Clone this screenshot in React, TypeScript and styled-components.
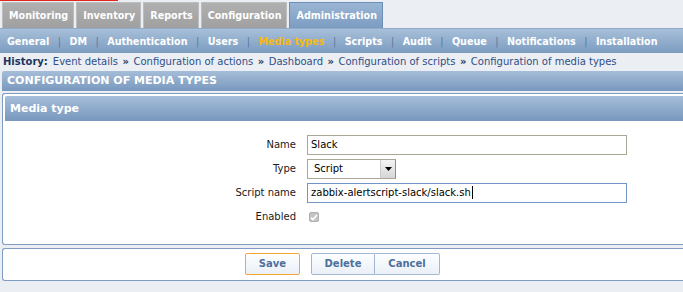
import React from "react";
import styled, { createGlobalStyle } from "styled-components";

const GlobalStyle = createGlobalStyle`
  html, body {
    margin: 0;
    padding: 0;
    background: #ebeef2;
    overflow: hidden;
  }
  body {
    font-family: "DejaVu Sans", Verdana, sans-serif;
    font-size: 10px;
    color: #1a1a1a;
  }
`;

const Page = styled.div`
  width: 686px;
`;

const RedLine = styled.div`
  width: 118px;
  height: 1px;
  background: #e0261f;
`;

const MainTabs = styled.div`
  display: flex;
  gap: 2px;
  padding: 1px 0 0 2px;
  height: 27px;
  box-sizing: border-box;
`;

const Tab = styled.div<{ $active?: boolean }>`
  box-sizing: border-box;
  height: 26px;
  line-height: 25px;
  padding: 0 5px 0 6px;
  font-weight: bold;
  font-size: 9.6px;
  color: #ffffff;
  white-space: nowrap;
  border: 1px solid ${(p) => (p.$active ? "#6c8fb8" : "#bdbdbd")};
  border-bottom: none;
  background: ${(p) =>
    p.$active
      ? "linear-gradient(#9bb6d4, #7b9cc1)"
      : "linear-gradient(#b0b0b0, #a0a0a0)"};
`;

const SubNav = styled.div`
  display: flex;
  align-items: center;
  height: 24px;
  padding-left: 7px;
  border-top: 1px solid #8eabcc;
  background: linear-gradient(#a7bfd9, #7c9cc0);
  font-weight: bold;
  font-size: 9.6px;
  white-space: nowrap;
`;

const SubItem = styled.span<{ $current?: boolean }>`
  color: ${(p) => (p.$current ? "#f7b90f" : "#ffffff")};
`;

const Sep = styled.span`
  color: #5777a0;
  font-weight: normal;
  margin: 0 8.5px;
`;

const History = styled.div`
  height: 18px;
  line-height: 18px;
  padding-left: 3px;
  font-size: 10px;
  white-space: nowrap;
`;

const HistoryLabel = styled.span`
  font-weight: bold;
  color: #1d3560;
  margin-right: 5px;
`;

const HistoryLink = styled.span`
  color: #2f4f88;
`;

const Arrow = styled.span`
  font-weight: bold;
  color: #1d3560;
  margin: 0 4.5px;
`;

const HeaderBar = styled.div<{ $tall?: boolean }>`
  height: ${(p) => (p.$tall ? "25px" : "20px")};
  line-height: ${(p) => (p.$tall ? "25px" : "20px")};
  padding-left: 5px;
  background: linear-gradient(#a5bdd8, #7898be);
  border-radius: 2px 0 0 0;
  color: #ffffff;
  font-weight: bold;
  font-size: 11px;
  white-space: nowrap;
`;

const Section = styled.div`
  margin-left: 2px;
`;

const Box = styled.div`
  margin-top: 2px;
  border: 1px solid #7f9dc2;
  border-right: none;
  border-radius: 3px 0 0 3px;
  background: #ffffff;
  padding: 2px 0 0 2px;
`;

const FormGrid = styled.div`
  display: grid;
  grid-template-columns: 291px 320px;
  grid-auto-rows: 20px;
  column-gap: 11px;
  row-gap: 4px;
  padding: 14px 0 17px 0;
`;

const Label = styled.div`
  text-align: right;
  line-height: 20px;
  color: #1a1a1a;
`;

const Field = styled.div<{ $focused?: boolean }>`
  box-sizing: border-box;
  height: 20px;
  line-height: 18px;
  padding: 0 3px;
  border: 1px solid ${(p) => (p.$focused ? "#7496c6" : "#aba796")};
  background: #ffffff;
  color: #000000;
  font-size: 10px;
  white-space: nowrap;
`;

const Caret = styled.span`
  display: inline-block;
  width: 1px;
  height: 13px;
  background: #000000;
  vertical-align: -3px;
  margin-left: 1px;
`;

const Select = styled.div`
  box-sizing: border-box;
  width: 89px;
  height: 20px;
  display: flex;
  border: 1px solid #aba796;
  border-right-color: #8d8d8d;
  background: #ffffff;
`;

const SelectValue = styled.div`
  flex: 1;
  line-height: 18px;
  padding-left: 6px;
  font-size: 10px;
  color: #000000;
`;

const SelectButton = styled.div`
  width: 14px;
  display: flex;
  align-items: center;
  justify-content: center;
  background: linear-gradient(#f4f4f4, #d6d6d6);
  border-left: 1px solid #c9c9c9;
`;

const CheckCell = styled.div`
  display: flex;
  align-items: center;
  padding-left: 2px;
`;

const Check = styled.span`
  box-sizing: border-box;
  width: 10px;
  height: 10px;
  display: flex;
  align-items: center;
  justify-content: center;
  border: 1px solid #b0b0b0;
  border-radius: 2px;
  background: #c4c4c4;
`;

const Footer = styled.div`
  margin-top: 3px;
  border: 1px solid #7f9dc2;
  border-right: none;
  border-radius: 3px 0 0 3px;
  background: #ffffff;
  display: flex;
  justify-content: center;
  padding: 4px 4px 5px 0;
`;

const Button = styled.div<{ $primary?: boolean; $joined?: "left" | "right" }>`
  box-sizing: border-box;
  height: 22px;
  line-height: 20px;
  padding: 0 10px;
  min-width: ${(p) => (p.$primary ? "55px" : "64px")};
  text-align: center;
  font-weight: bold;
  font-size: 10px;
  color: #4d6f9c;
  background: linear-gradient(#fdfeff, #eaf0f7);
  border: 1px solid ${(p) => (p.$primary ? "#f5a634" : "#a2b7d3")};
  border-radius: ${(p) =>
    p.$joined === "left" ? "2px 0 0 2px" : p.$joined === "right" ? "0 2px 2px 0" : "2px"};
  margin-right: ${(p) => (p.$primary ? "11px" : "0")};
  ${(p) => (p.$joined === "right" ? "border-left: none; min-width: 65px;" : "")}
`;

const mainTabs = ["Monitoring", "Inventory", "Reports", "Configuration", "Administration"];
const subItems = [
  "General",
  "DM",
  "Authentication",
  "Users",
  "Media types",
  "Scripts",
  "Audit",
  "Queue",
  "Notifications",
  "Installation",
];
const history = [
  "Event details",
  "Configuration of actions",
  "Dashboard",
  "Configuration of scripts",
  "Configuration of media types",
];

const App: React.FC = () => {
  return (
    <Page>
      <GlobalStyle />
      <RedLine />
      <MainTabs>
        {mainTabs.map((t) => (
          <Tab key={t} $active={t === "Administration"}>
            {t}
          </Tab>
        ))}
      </MainTabs>
      <SubNav>
        {subItems.map((s, i) => (
          <React.Fragment key={s}>
            {i > 0 && <Sep>|</Sep>}
            <SubItem $current={s === "Media types"}>{s}</SubItem>
          </React.Fragment>
        ))}
      </SubNav>
      <History>
        <HistoryLabel>History:</HistoryLabel>
        {history.map((h, i) => (
          <React.Fragment key={h}>
            {i > 0 && <Arrow>»</Arrow>}
            <HistoryLink>{h}</HistoryLink>
          </React.Fragment>
        ))}
      </History>
      <Section>
        <HeaderBar>CONFIGURATION OF MEDIA TYPES</HeaderBar>
        <Box>
          <HeaderBar $tall>Media type</HeaderBar>
          <FormGrid>
            <Label>Name</Label>
            <Field>Slack</Field>
            <Label>Type</Label>
            <Select>
              <SelectValue>Script</SelectValue>
              <SelectButton>
                <svg width="7" height="4" viewBox="0 0 7 4">
                  <path d="M0 0h7L3.5 4z" fill="#000" />
                </svg>
              </SelectButton>
            </Select>
            <Label>Script name</Label>
            <Field $focused>
              zabbix-alertscript-slack/slack.sh
              <Caret />
            </Field>
            <Label>Enabled</Label>
            <CheckCell>
              <Check>
                <svg width="8" height="7" viewBox="0 0 8 7">
                  <path d="M1 3.6l2 2L7 1" stroke="#ffffff" strokeWidth="1.7" fill="none" />
                </svg>
              </Check>
            </CheckCell>
          </FormGrid>
        </Box>
        <Footer>
          <Button $primary>Save</Button>
          <Button $joined="left">Delete</Button>
          <Button $joined="right">Cancel</Button>
        </Footer>
      </Section>
    </Page>
  );
};

export default App;
